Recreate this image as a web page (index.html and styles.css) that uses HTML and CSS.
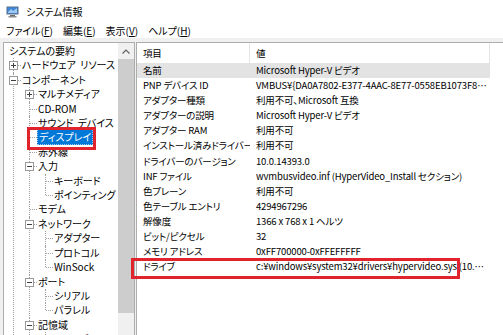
FILE: index.html
```html
<!DOCTYPE html>
<html lang="ja">
<head>
  <meta charset="utf-8">
  <title>システム情報</title>
  <link rel="stylesheet" href="styles.css">
</head>
<body>
  <div class="titlebar">
    <svg class="app-icon" width="13" height="13" viewBox="0 0 13 13">
      <rect x="0.5" y="1.5" width="12" height="8" fill="#5a6e8c"/>
      <rect x="1.5" y="2.5" width="10" height="6" fill="#3f86d9"/>
      <path d="M2 7 L5 4 L7 6 L11 3 L11 8 L2 8 Z" fill="#9cc8f2"/>
      <rect x="4" y="10" width="5" height="1" fill="#6b6b6b"/>
      <rect x="2.5" y="11" width="8" height="1.5" fill="#8a8a8a"/>
    </svg>
    <span>システム情報</span>
  </div>

  <div class="menubar">
    <span class="menu">ファイル(<u>F</u>)</span>
    <span class="menu">編集(<u>E</u>)</span>
    <span class="menu">表示(<u>V</u>)</span>
    <span class="menu">ヘルプ(<u>H</u>)</span>
  </div>

  <div class="client">
    <div class="tree-pane">
      <div class="tree">
        <div class="root">システムの要約</div>
        <ul>
          <li><span class="exp plus"></span><span class="label">ハードウェア リソース</span></li>
          <li><span class="exp"></span><span class="label">コンポーネント</span>
            <ul>
              <li><span class="exp plus"></span><span class="label">マルチメディア</span></li>
              <li><span class="label">CD-ROM</span></li>
              <li><span class="label">サウンド デバイス</span></li>
              <li><span class="label selected">ディスプレイ</span></li>
              <li><span class="label">赤外線</span></li>
              <li><span class="exp"></span><span class="label">入力</span>
                <ul>
                  <li><span class="label">キーボード</span></li>
                  <li><span class="label">ポインティング デバイス</span></li>
                </ul>
              </li>
              <li><span class="label">モデム</span></li>
              <li><span class="exp"></span><span class="label">ネットワーク</span>
                <ul>
                  <li><span class="label">アダプター</span></li>
                  <li><span class="label">プロトコル</span></li>
                  <li><span class="label">WinSock</span></li>
                </ul>
              </li>
              <li><span class="exp"></span><span class="label">ポート</span>
                <ul>
                  <li><span class="label">シリアル</span></li>
                  <li><span class="label">パラレル</span></li>
                </ul>
              </li>
              <li><span class="exp"></span><span class="label">記憶域</span>
                <ul>
                  <li><span class="label">ドライブ</span></li>
                  <li><span class="label">SCSI</span></li>
                </ul>
              </li>
              <li><span class="label">印刷</span></li>
            </ul>
          </li>
          <li><span class="exp plus"></span><span class="label">ソフトウェア環境</span></li>
        </ul>
      </div>
      <div class="vscroll">
        <div class="arrow">
          <svg width="8" height="5" viewBox="0 0 8 5"><path d="M0.5 4.5 L4 1 L7.5 4.5" fill="none" stroke="#606060" stroke-width="1.2"/></svg>
        </div>
        <div class="thumb"></div>
      </div>
    </div>

    <div class="list-pane">
      <div class="list-head">
        <div class="col1">項目</div>
        <div class="col2">値</div>
      </div>
      <div class="row current"><div class="col1">名前</div><div class="col2">Microsoft Hyper-V ビデオ</div></div>
      <div class="row"><div class="col1">PNP デバイス ID</div><div class="col2">VMBUS¥{DA0A7802-E377-4AAC-8E77-0558EB1073F8}¥5620e0c7-8062-4dce-aeb7-520c7ef76171</div></div>
      <div class="row"><div class="col1">アダプター種類</div><div class="col2">利用不可、Microsoft 互換</div></div>
      <div class="row"><div class="col1">アダプターの説明</div><div class="col2">Microsoft Hyper-V ビデオ</div></div>
      <div class="row"><div class="col1">アダプター RAM</div><div class="col2">利用不可</div></div>
      <div class="row"><div class="col1">インストール済みドライバー</div><div class="col2">利用不可</div></div>
      <div class="row"><div class="col1">ドライバーのバージョン</div><div class="col2">10.0.14393.0</div></div>
      <div class="row"><div class="col1">INF ファイル</div><div class="col2">wvmbusvideo.inf (HyperVideo_Install セクション)</div></div>
      <div class="row"><div class="col1">色プレーン</div><div class="col2">利用不可</div></div>
      <div class="row"><div class="col1">色テーブル エントリ</div><div class="col2">4294967296</div></div>
      <div class="row"><div class="col1">解像度</div><div class="col2">1366 x 768 x 1 ヘルツ</div></div>
      <div class="row"><div class="col1">ビット/ピクセル</div><div class="col2">32</div></div>
      <div class="row"><div class="col1">メモリ アドレス</div><div class="col2">0xFF700000-0xFFEFFFFF</div></div>
      <div class="row"><div class="col1">ドライブ</div><div class="col2">c:¥windows¥system32¥drivers¥hypervideo.sys (10.0.14393.0, 40.50 KB (41,472 バイト), 2016/07/16 15:41)</div></div>
    </div>
  </div>

  <!-- red annotation boxes -->
  <div class="mark mark-tree"></div>
  <div class="mark mark-row"></div>
</body>
</html>
```

FILE: styles.css
```css
body {
  margin: 0;
  width: 503px;
  height: 335px;
  overflow: hidden;
  position: relative;
  background: #fff;
  color: #000;
  font-family: "Noto Sans CJK JP", "Noto Sans", sans-serif;
  font-size: 10px;
  font-feature-settings: "palt";
}

.titlebar {
  height: 22px;
  display: flex;
  align-items: center;
  gap: 7px;
  padding-left: 6px;
}

.menubar {
  height: 16px;
  display: flex;
  align-items: center;
  padding-left: 1px;
}

.menu {
  padding: 0 5px;
}

.client {
  height: 297px;
  display: flex;
  gap: 1px;
  padding: 4px 0 0 3px;
  background: #f0f0f0;
}

/* tree on the left */
.tree-pane {
  width: 130px;
  display: flex;
  background: #fff;
  border: 1px solid #adadad;
}

.tree {
  width: 114px;
  padding-top: 1px;
  overflow: hidden;
  white-space: nowrap;
  line-height: 14.4px;
  word-spacing: 2px;
}

.root {
  padding-left: 5px;
}

.tree ul {
  list-style: none;
  margin: 0 0 0 9px;
  padding: 0;
}

.tree li ul {
  margin-left: 7px;
}

.tree li {
  position: relative;
  padding-left: 9px;
}

.tree li::before {
  content: "";
  position: absolute;
  left: 0;
  top: 0;
  bottom: 0;
  border-left: 1px dotted #a0a0a0;
}

.tree li:last-child::before {
  bottom: auto;
  height: 7px;
}

.tree li::after {
  content: "";
  position: absolute;
  left: 1px;
  top: 7px;
  width: 7px;
  border-top: 1px dotted #a0a0a0;
}

.exp {
  position: absolute;
  left: -4px;
  top: 3px;
  width: 7px;
  height: 7px;
  border: 1px solid #9a9a9a;
  background: #fff;
  z-index: 1;
}

.exp::before {
  content: "";
  position: absolute;
  left: 1px;
  top: 3px;
  width: 5px;
  height: 1px;
  background: #404040;
}

.exp.plus::after {
  content: "";
  position: absolute;
  left: 3px;
  top: 1px;
  width: 1px;
  height: 5px;
  background: #404040;
}

.label.selected {
  margin-left: -1px;
  padding: 1px 2px;
  background: #0078d7;
  color: #fff;
  outline: 1px dotted #99c9ef;
  outline-offset: -1px;
}

.vscroll {
  width: 16px;
  display: flex;
  flex-direction: column;
  background: #f0f0f0;
}

.vscroll .arrow {
  height: 16px;
  display: flex;
  align-items: center;
  justify-content: center;
}

.vscroll .thumb {
  height: 254px;
  background: #cdcdcd;
}

/* list on the right */
.list-pane {
  flex: 1;
  background: #fff;
  border: 1px solid #adadad;
  border-right: none;
  white-space: nowrap;
  font-size: 9.5px;
  letter-spacing: -0.15px;
}

.list-head {
  height: 20px;
  display: flex;
}

.list-head .col1,
.list-head .col2 {
  height: 20px;
  line-height: 21px;
  border-right: 1px solid #e5e5e5;
}

.row {
  display: flex;
  height: 15.1px;
  line-height: 15.1px;
  width: 353px;
}

.row.current {
  background: #e3e3e3;
}

.col1 {
  width: 113px;
  box-sizing: border-box;
  padding-left: 6px;
  overflow: hidden;
}

.col2 {
  width: 240px;
  box-sizing: border-box;
  padding-left: 6px;
  padding-right: 3px;
  overflow: hidden;
  text-overflow: ellipsis;
}

/* red annotation boxes */
.mark {
  position: absolute;
  border: 3px solid #e1232d;
}

.mark-tree {
  left: 27px;
  top: 127px;
  width: 63px;
  height: 17px;
}

.mark-row {
  left: 131px;
  top: 258px;
  width: 323px;
  height: 15px;
}
```
